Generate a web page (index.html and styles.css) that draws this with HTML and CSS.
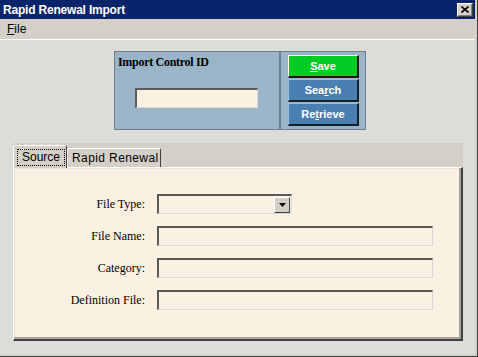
FILE: index.html
```html
<!DOCTYPE html>
<html>
<head>
<meta charset="utf-8">
<link rel="stylesheet" href="styles.css">
</head>
<body>
<div class="window">
  <div class="titlebar">
    <span class="title">Rapid Renewal Import</span>
    <span class="close"><svg width="8" height="7" viewBox="0 0 8 7"><path d="M0.5 0.5 L7.5 6.5 M7.5 0.5 L0.5 6.5" stroke="#000" stroke-width="1.6" fill="none"/></svg></span>
  </div>
  <div class="menubar"><span class="menu"><u>F</u>ile</span></div>
  <div class="body">
    <div class="top-panel">
      <div class="id-section">
        <div class="id-label">Import Control ID</div>
        <div class="field id-input"></div>
      </div>
      <div class="btn-section">
        <div class="btn btn-save"><u>S</u>ave</div>
        <div class="btn btn-blue">Sea<u>r</u>ch</div>
        <div class="btn btn-blue">Re<u>t</u>rieve</div>
      </div>
    </div>
    <div class="tabs">
      <div class="tabstrip">
        <div class="tab tab-active"><span class="focus">Source</span></div>
        <div class="tab tab-inactive">Rapid Renewal</div>
      </div>
      <div class="tabpanel">
        <div class="form">
          <div class="label">File Type:</div>
          <div class="field combo"><span class="drop"><svg width="7" height="4" viewBox="0 0 7 4"><path d="M0 0 H7 L3.5 4 Z" fill="#000"/></svg></span></div>
          <div class="label">File Name:</div>
          <div class="field wide"></div>
          <div class="label">Category:</div>
          <div class="field wide"></div>
          <div class="label">Definition File:</div>
          <div class="field wide"></div>
        </div>
      </div>
    </div>
  </div>
</div>
</body>
</html>
```

FILE: styles.css
```css
html, body {
  margin: 0;
  padding: 0;
  background: #dcdcd8;
}
.window {
  width: 478px;
  height: 357px;
  box-sizing: border-box;
  border-right: 1px solid #404040;
  border-bottom: 1px solid #404040;
  padding-right: 2px;
  padding-bottom: 2px;
  background: #d4d0c8;
  display: flex;
  flex-direction: column;
  overflow: hidden;
}
.titlebar {
  height: 19px;
  background: #0a246a;
  display: flex;
  align-items: center;
  justify-content: space-between;
  padding: 0 2px 0 3px;
  flex: none;
}
.title {
  color: #fff;
  font: bold 12px "Liberation Sans", Arial, sans-serif;
  letter-spacing: -0.2px;
}
.close {
  width: 16px;
  height: 14px;
  box-sizing: border-box;
  background: #d4d0c8;
  border-style: solid;
  border-width: 1px;
  border-color: #fff #404040 #404040 #fff;
  box-shadow: inset -1px -1px 0 #808080;
  display: flex;
  align-items: center;
  justify-content: center;
}
.menubar {
  height: 20px;
  background: #d4d0c8;
  border-bottom: 1px solid #fff;
  display: flex;
  align-items: center;
  padding-left: 7px;
  flex: none;
}
.menu {
  font: 12px "Liberation Sans", Arial, sans-serif;
  color: #000;
}
.body {
  flex: 1;
  background: #dcdcd8;
  padding-top: 11px;
}
.top-panel {
  margin-left: 114px;
  width: 252px;
  height: 79px;
  box-sizing: border-box;
  background: #9bb5c8;
  border: 1px solid #6e7e8a;
  display: flex;
}
.id-section {
  width: 164px;
  box-sizing: border-box;
  padding: 3px 0 0 3px;
}
.id-label {
  font: bold 12px "Liberation Serif", "Times New Roman", serif;
  color: #000;
  letter-spacing: -0.3px;
  height: 14px;
}
.id-input {
  margin: 19px 0 0 17px;
  width: 123px;
  height: 20px;
}
.btn-section {
  border-left: 2px solid #6e7e8a;
  padding: 3px 0 0 7px;
  display: flex;
  flex-direction: column;
  gap: 1px;
}
.btn {
  width: 71px;
  height: 23px;
  box-sizing: border-box;
  display: flex;
  align-items: center;
  justify-content: center;
  color: #fff;
  font: bold 11px "Liberation Sans", Arial, sans-serif;
  border-style: solid;
  border-width: 1px 2px 2px 1px;
}
.btn-save {
  background: #00cc22;
  border-color: #fff #1a1a1a #1a1a1a #fff;
}
.btn-blue {
  background: #4a7fb2;
  border-color: #9fc0dc #14222e #14222e #9fc0dc;
}
.tabs {
  margin: 13px 0 0 13px;
  width: 450px;
}
.tabstrip {
  height: 24px;
  background: #d4d0c8;
  display: flex;
  align-items: flex-end;
}
.tab {
  box-sizing: border-box;
  background: #d4d0c8;
  font: 12px "Liberation Sans", Arial, sans-serif;
  color: #000;
  border-style: solid;
  border-width: 1px 1px 0 1px;
  border-color: #fff #404040 transparent #fff;
  border-radius: 2px 2px 0 0;
  display: flex;
  align-items: center;
}
.tab-active {
  width: 54px;
  height: 22px;
  padding-left: 3px;
  position: relative;
  z-index: 1;
  margin-bottom: -1px;
  height: 23px;
}
.focus {
  border: 1px dotted #000;
  padding: 1px 4px 1px 4px;
  line-height: 13px;
}
.tab-inactive {
  width: 94px;
  height: 19px;
  padding-left: 4px;
  letter-spacing: 0.4px;
}
.tabpanel {
  height: 174px;
  box-sizing: border-box;
  background: #fbf1e3;
  border-style: solid;
  border-width: 1px 2px 2px 1px;
  border-color: #fff #404040 #404040 #fff;
  box-shadow: inset -2px -2px 0 #a8a49c, inset 1px 1px 0 #e8e4dc;
  padding-top: 26px;
}
.form {
  display: grid;
  grid-template-columns: 131px 276px;
  column-gap: 12px;
  row-gap: 12px;
}
.label {
  text-align: right;
  font: 12px "Liberation Serif", "Times New Roman", serif;
  color: #000;
  line-height: 20px;
}
.field {
  height: 20px;
  box-sizing: border-box;
  background: #fbf1e3;
  border-style: solid;
  border-width: 2px 1px 1px 2px;
  border-color: #5a5a5a #d8d8d8 #d8d8d8 #5a5a5a;
}
.combo {
  width: 135px;
  display: flex;
  justify-content: flex-end;
  align-items: center;
  padding-right: 1px;
}
.drop {
  width: 16px;
  height: 16px;
  box-sizing: border-box;
  background: #d4d0c8;
  border-style: solid;
  border-width: 1px;
  border-color: #fff #404040 #404040 #fff;
  display: flex;
  align-items: center;
  justify-content: center;
}
.wide {
  width: 276px;
}
```
